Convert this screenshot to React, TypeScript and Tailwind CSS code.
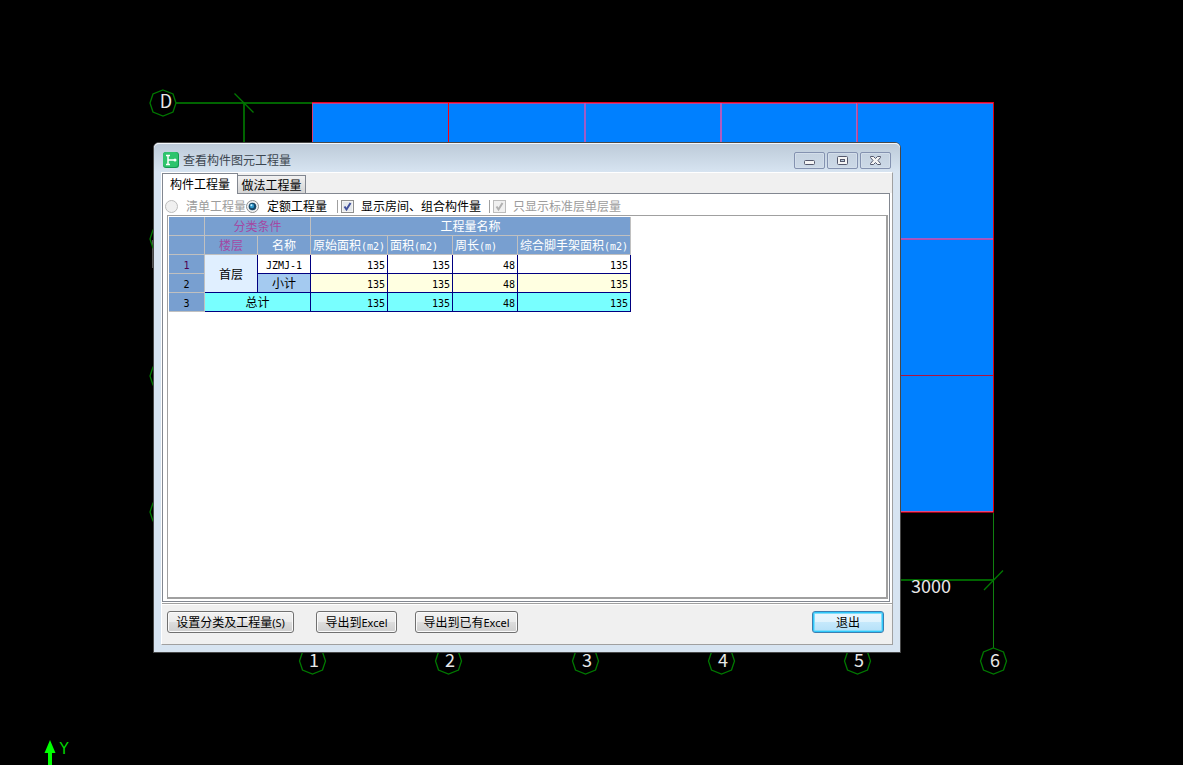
import React, { useState } from "react";

const AXIS_X = [312, 448, 585, 721, 857, 993];
const AXIS_Y = [103, 239, 376, 512];

const QUANTITIES = ["135", "135", "48", "135"];

// Octagonal axis marker
function octagon(cx: number, cy: number) {
  const d = 10;
  return [
    [cx, cy - 13],
    [cx + d, cy - d + 1],
    [cx + 13, cy],
    [cx + d, cy + d - 1],
    [cx, cy + 13],
    [cx - d, cy + d - 1],
    [cx - 13, cy],
    [cx - d, cy - d + 1],
  ]
    .map((p) => p.join(","))
    .join(" ");
}

function Drawing() {
  return (
    <svg
      className="absolute inset-0 w-full h-full font-['Noto_Sans_CJK_SC',sans-serif]"
      aria-hidden="true"
    >
      {/* Slab */}
      <rect x="312" y="102" width="682" height="411" fill="#0080ff" />
      <g shapeRendering="crispEdges">
        <rect x="312" y="103" width="682" height="1" fill="#b04a9c" />
        <rect x="312" y="102" width="682" height="1" fill="#e8001c" />
        <rect x="312" y="103" width="1" height="410" fill="#d83c78" />
        <rect x="448" y="103" width="1" height="410" fill="#ff0010" />
        <rect x="584" y="103" width="2" height="410" fill="#a05cc8" />
        <rect x="720" y="103" width="2" height="410" fill="#b05cc0" />
        <rect x="856" y="103" width="1" height="410" fill="#9070d0" />
        <rect x="857" y="103" width="1" height="410" fill="#d03c80" />
        <rect x="312" y="238" width="682" height="1" fill="#a05cc8" />
        <rect x="312" y="239" width="682" height="1" fill="#b04cb0" />
        <rect x="312" y="375" width="682" height="1" fill="#b01440" />
        <rect x="312" y="511" width="682" height="1" fill="#e04880" />
        <rect x="312" y="512" width="682" height="1" fill="#a00010" />
        <rect x="993" y="102" width="1" height="410" fill="#e00010" />

        {/* Axis and dimension lines */}
        <rect x="176" y="102" width="136" height="2" fill="#006400" />
        <rect x="243" y="103" width="2" height="50" fill="#006400" />
        <rect x="880" y="579" width="113" height="2" fill="#006400" />
        <rect x="993" y="513" width="1" height="135" fill="#108010" />
        <rect x="152" y="240" width="1" height="28" fill="#555" />
      </g>
      <g stroke="#007800" fill="none">
        <path d="M234.500 93.500L253.500 112.500M984 590L1003 570.500" strokeWidth="1.300" />
        {AXIS_Y.map((y) => (
          <polygon key={y} points={octagon(163, y)} strokeWidth="1.300" />
        ))}
        {AXIS_X.map((x) => (
          <polygon key={x} points={octagon(x + 0.5, 661)} strokeWidth="1.300" />
        ))}
      </g>
      <g fill="#e8e8e8" fontSize="18" textAnchor="middle">
        <text x="166" y="108">D</text>
        {AXIS_X.map((x, i) => (
          <text key={x} x={x + 2} y="667">
            {i + 1}
          </text>
        ))}
        <text x="931" y="593">3000</text>
      </g>

      {/* UCS arrow */}
      <path d="M50 740L55.500 753H52V765H48V753H44.500Z" fill="#00ff00" />
      <text
        x="64"
        y="754"
        fontSize="15"
        textAnchor="middle"
        fill="#00d800"
        className="font-['DejaVu_Sans',sans-serif]"
      >
        Y
      </text>
    </svg>
  );
}

function AppIcon() {
  return (
    <svg width="16" height="16" viewBox="0 0 16 16">
      <rect width="16" height="16" rx="3" fill="#149a50" />
      <rect width="15" height="15" rx="3" fill="#2ec46c" />
      <path
        d="M3 3.500H7M5 3.500V12.500M3 12.500H7M5 8H11"
        stroke="#fff"
        strokeWidth="1.500"
        fill="none"
      />
      <circle cx="12" cy="8" r="1.500" fill="#fff" />
    </svg>
  );
}

function WindowButton({ label, children }: { label: string; children: React.ReactNode }) {
  return (
    <button
      aria-label={label}
      className="flex items-center justify-center w-[31px] h-[17px] rounded-[2px] border border-[#8492b0] bg-gradient-to-b from-[#c5d2e0] to-[#ccd9e7] shadow-[inset_0_0_0_1px_#d3deea]"
    >
      <svg width="13" height="11" viewBox="0 0 13 11" className="block">
        {children}
      </svg>
    </button>
  );
}

interface OptionProps {
  type: "radio" | "checkbox";
  label: string;
  checked: boolean;
  disabled?: boolean;
  onChange?: () => void;
}

function Option({ type, label, checked, disabled, onChange }: OptionProps) {
  return (
    <label
      className={`flex items-center whitespace-nowrap ${
        type === "radio" ? "gap-2" : "gap-[7px]"
      } ${disabled ? "text-[#9c9c9c]" : "text-black"}`}
    >
      <span className="relative block size-[13px]">
        <input
          type={type}
          name={type === "radio" ? "quantity" : undefined}
          checked={checked}
          disabled={disabled}
          onChange={onChange}
          className={`block appearance-none size-[13px] border ${
            type === "radio" ? "rounded-full" : ""
          } ${
            disabled
              ? "border-[#bcbcbc] bg-[#f0f0f0]"
              : "border-[#8e8f8f] bg-[#e4e8ec] shadow-[inset_0_0_0_1px_#f4f4f4]"
          }`}
        />
        {checked && (
          <svg
            viewBox="0 0 13 13"
            className="absolute inset-0 size-[13px] pointer-events-none"
          >
            {type === "radio" ? (
              <>
                <circle cx="6.500" cy="6.500" r="3.800" fill="#174868" />
                <circle cx="6" cy="6" r="2.200" fill="#3098cc" />
                <circle cx="5.400" cy="5.200" r="1" fill="#c8f0ff" />
              </>
            ) : (
              <path
                d="M3.500 6.500L5.500 9.500L9.500 3"
                fill="none"
                stroke={disabled ? "#b0b0b0" : "#40509c"}
                strokeWidth="2"
              />
            )}
          </svg>
        )}
      </span>
      {label}
    </label>
  );
}

function Separator() {
  return <span className="w-px h-[13px] bg-[#a0a0a0]" />;
}

// Latin text inside the grid is set half as wide as the Chinese characters
function Half({ children }: { children: React.ReactNode }) {
  return (
    <span className="text-[10px] leading-none font-['DejaVu_Sans_Mono',monospace]">
      {children}
    </span>
  );
}

const HEAD = "h-[19px] p-0 font-normal border-r border-b border-[#c0c0c0] bg-[#789fd0]";
const CELL = "h-[19px] p-0 border-r border-b border-[#000080]";

function Quantities({ className }: { className: string }) {
  return (
    <>
      {QUANTITIES.map((value, i) => (
        <td key={i} className={`${CELL} pr-[2px] text-right ${className}`}>
          <Half>{value}</Half>
        </td>
      ))}
    </>
  );
}

function QuantityTable() {
  return (
    <table className="table-fixed w-[462px] border-separate border-spacing-0 text-center text-xs leading-4 whitespace-nowrap">
      <colgroup>
        <col className="w-[36px]" />
        <col className="w-[53px]" />
        <col className="w-[53px]" />
        <col className="w-[77px]" />
        <col className="w-[65px]" />
        <col className="w-[65px]" />
        <col className="w-[113px]" />
      </colgroup>
      <thead className="text-white">
        <tr>
          <th className={HEAD}></th>
          <th colSpan={2} className={`${HEAD} text-[#a349a4]`}>分类条件</th>
          <th colSpan={4} className={HEAD}>工程量名称</th>
        </tr>
        <tr>
          <th className={HEAD}></th>
          <th className={`${HEAD} text-[#a349a4]`}>楼层</th>
          <th className={HEAD}>名称</th>
          <th className={`${HEAD} pl-[2px] text-left`}>原始面积<Half>(m2)</Half></th>
          <th className={`${HEAD} pl-[2px] text-left`}>面积<Half>(m2)</Half></th>
          <th className={`${HEAD} pl-[2px] text-left`}>周长<Half>(m)</Half></th>
          <th className={`${HEAD} pl-[2px] text-left`}>综合脚手架面积<Half>(m2)</Half></th>
        </tr>
      </thead>
      <tbody>
        <tr>
          <th className={`${HEAD} text-[#500050]`}><Half>1</Half></th>
          <td rowSpan={2} className={`${CELL} bg-[#e0efff]`}>首层</td>
          <td className={`${CELL} bg-white`}><Half>JZMJ-1</Half></td>
          <Quantities className="bg-white" />
        </tr>
        <tr>
          <th className={HEAD}><Half>2</Half></th>
          <td className={`${CELL} bg-[#a4caf0]`}>小计</td>
          <Quantities className="bg-[#ffffe1]" />
        </tr>
        <tr>
          <th className={HEAD}><Half>3</Half></th>
          <td colSpan={2} className={`${CELL} bg-[#78ffff]`}>总计</td>
          <Quantities className="bg-[#78ffff]" />
        </tr>
      </tbody>
    </table>
  );
}

function PushButton({ className, children }: { className: string; children: React.ReactNode }) {
  return (
    <button
      className={`h-[22px] rounded-[3px] border text-xs leading-5 whitespace-nowrap ${className}`}
    >
      {children}
    </button>
  );
}

const GRAY_BUTTON =
  "border-[#707070] bg-[linear-gradient(#f2f2f2_0%,#ebebeb_50%,#dddddd_50%,#cfcfcf_100%)] shadow-[inset_0_0_0_1px_#fafafa]";

export default function App() {
  const [mode, setMode] = useState("quota");
  const [showRooms, setShowRooms] = useState(true);

  return (
    <main className="relative min-h-screen overflow-hidden bg-black pt-[142px] pr-[282px] pb-[112px] pl-[153px] text-xs font-['Noto_Sans_CJK_SC',sans-serif]">
      <Drawing />

      {/* Dialog */}
      <section className="relative rounded-t-[6px] border border-[#484848] bg-[#d7e4f1] shadow-[inset_0_1px_0_#f4f8fc]">
        <header className="flex items-start h-[29px] pt-[9px] pl-[9px] pr-[9px] rounded-t-[5px] bg-gradient-to-b from-[#bccad8] to-[#d7e4f1] shadow-[inset_0_1px_0_#f4f8fc]">
          <AppIcon />
          <h1 className="ml-1 leading-4 text-[#3c4650]">查看构件图元工程量</h1>
          <div className="flex gap-[2px] ml-auto">
            <WindowButton label="最小化">
              <rect x="1.500" y="5.500" width="10" height="4" rx="1" fill="#f4f4f4" stroke="#54586c" />
            </WindowButton>
            <WindowButton label="最大化">
              <rect x="1.500" y="1.500" width="10" height="8" rx="1" fill="#f4f4f4" stroke="#54586c" />
              <rect x="4.500" y="4.500" width="4" height="2" fill="#b8c8d8" stroke="#54586c" />
            </WindowButton>
            <WindowButton label="关闭">
              <path
                d="M1.500 1.500H4.500L6.500 3.500L8.500 1.500H11.500V2.500L9 5.500L11.500 8.500V9.500H8.500L6.500 7.500L4.500 9.500H1.500V8.500L4 5.500L1.500 2.500Z"
                fill="#f4f4f4"
                stroke="#54586c"
              />
            </WindowButton>
          </div>
        </header>

        <div className="mx-[7px] mb-[7px] border border-t-white border-l-white border-r-[#a0a0a0] border-b-[#a0a0a0] bg-[#f0f0f0]">
          <div role="tablist" className="flex items-end h-5">
            <button
              role="tab"
              aria-selected="true"
              className="relative z-10 -mb-px w-[76px] h-[21px] border border-b-0 border-[#828790] bg-white pb-px leading-[18px]"
            >
              构件工程量
            </button>
            <button
              role="tab"
              aria-selected="false"
              className="w-[68px] h-[18px] border border-l-0 border-b-0 border-[#828790] bg-gradient-to-b from-[#f2f2f2] to-[#d4d4d4] leading-[17px]"
            >
              做法工程量
            </button>
          </div>

          <div className="bg-white pr-[2px] pb-px border-b border-[#a0a0a0]">
            <div className="border border-[#828790] pl-1 pr-px pb-[2px]">
              <div className="flex items-center h-[21px] pt-[3px] -ml-[2px]">
                <Option
                  type="radio"
                  label="清单工程量"
                  checked={mode === "list"}
                  disabled
                />
                <Option
                  type="radio"
                  label="定额工程量"
                  checked={mode === "quota"}
                  onChange={() => setMode("quota")}
                />
                <div className="flex items-center gap-[3px] ml-[10px]">
                  <Separator />
                  <Option
                    type="checkbox"
                    label="显示房间、组合构件量"
                    checked={showRooms}
                    onChange={() => setShowRooms(!showRooms)}
                  />
                </div>
                <div className="flex items-center gap-[3px] ml-2">
                  <Separator />
                  <Option type="checkbox" label="只显示标准层单层量" checked disabled />
                </div>
              </div>
              <div className="min-h-[384px] pt-px pl-px border border-r-2 border-b-2 border-[#a0a0a0]">
                <QuantityTable />
              </div>
            </div>
          </div>

          <footer className="flex items-start h-10 pt-[6px] pl-[5px] pr-2 border-t border-white">
            <PushButton className={`w-[127px] ${GRAY_BUTTON}`}>
              设置分类及工程量
              <span className="text-[11px] font-['Noto_Sans',sans-serif]">(S)</span>
            </PushButton>
            <PushButton className={`w-[81px] ml-[22px] ${GRAY_BUTTON}`}>
              导出到
              <span className="text-[11px] font-['Noto_Sans',sans-serif]">Excel</span>
            </PushButton>
            <PushButton className={`w-[103px] ml-[18px] ${GRAY_BUTTON}`}>
              导出到已有
              <span className="text-[11px] font-['Noto_Sans',sans-serif]">Excel</span>
            </PushButton>
            <PushButton className="w-[72px] ml-auto border-[#3c7fb1] bg-[linear-gradient(#eaf6fd_0%,#e0f3fd_50%,#c6e9fc_50%,#b4e0f8_100%)] shadow-[inset_0_0_0_1px_#30c8fa,inset_0_0_0_2px_#80dcfa]">
              退出
            </PushButton>
          </footer>
        </div>
      </section>
    </main>
  );
}
